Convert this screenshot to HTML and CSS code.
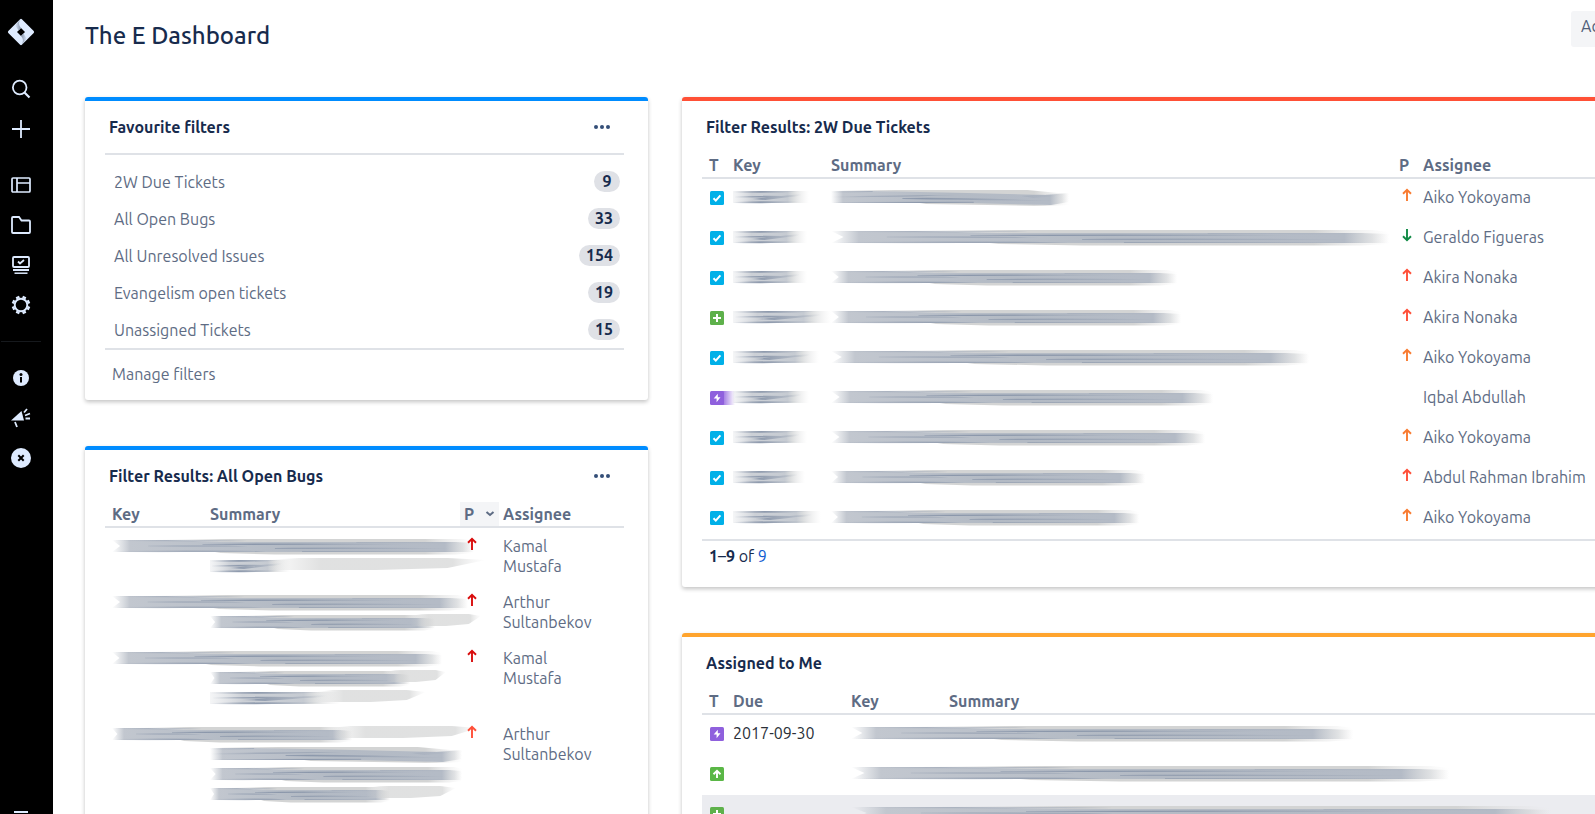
FILE: index.html
```html
<!DOCTYPE html>
<html lang="en">
<head>
<meta charset="utf-8">
<title>The E Dashboard</title>
<link rel="stylesheet" href="styles.css">
</head>
<body>
<svg class="defs" aria-hidden="true">
  <defs>
    <linearGradient id="fade"><stop offset="0" stop-color="#c6cbd2" stop-opacity="0"/><stop offset=".05" stop-color="#c2c7cf"/><stop offset=".5" stop-color="#b3bac4"/><stop offset=".92" stop-color="#b4bbc6"/><stop offset=".97" stop-color="#cfd2d5" stop-opacity=".6"/><stop offset="1" stop-color="#dcdcdc" stop-opacity="0"/></linearGradient>
    <linearGradient id="haze"><stop offset="0" stop-color="#d3d4d4" stop-opacity="0"/><stop offset=".25" stop-color="#d3d4d4"/><stop offset=".85" stop-color="#d3d4d4"/><stop offset="1" stop-color="#e4e4e4" stop-opacity="0"/></linearGradient>
    <linearGradient id="streak"><stop offset="0" stop-color="#7c8aa2" stop-opacity="0"/><stop offset=".4" stop-color="#8491a6" stop-opacity=".85"/><stop offset="1" stop-color="#8491a6" stop-opacity="0"/></linearGradient>
    <linearGradient id="keyfade"><stop offset="0" stop-color="#dcdfe3" stop-opacity=".3"/><stop offset=".25" stop-color="#ccd0d6"/><stop offset=".72" stop-color="#c6cbd2"/><stop offset=".8" stop-color="#dcdedf"/><stop offset="1" stop-color="#ececec" stop-opacity="0"/></linearGradient>
  </defs>
  <symbol id="smear-long" viewBox="0 0 400 20" preserveAspectRatio="none">
    <path fill="url(#haze)" d="M40 4 120 3H388L400 5V17L380 18.500H180L120 17Z"/>
    <path fill="url(#fade)" d="M0 4H60L120 6H380L400 7V16H0L9 10Z"/>
    <path fill="url(#streak)" d="M4 4.300Q80 3.500 150 5 80 5.500 4 5ZM100 8Q200 7 330 8 200 9.500 100 8.800ZM4 15Q90 14 170 15.200 90 16.500 4 16ZM180 12Q260 11 380 12.500 280 13.500 180 12.800ZM40 9.500Q90 9 150 10.200 90 11 40 10.500ZM210 15.200 384 15V16H210ZM270 6.500 385 6.300V7.300L270 7Z"/>
  </symbol>
  <symbol id="smear-wave" viewBox="0 0 400 20" preserveAspectRatio="none">
    <path fill="url(#haze)" d="M10 3H330L400 7V18L360 19 160 17Z"/>
    <path fill="url(#fade)" d="M0 4H70L230 6 360 8 400 6V15L370 18 230 16H0Z"/>
    <path fill="url(#streak)" d="M0 4.300 70 4V5L0 6ZM2 9.500Q70 8 210 8.500 80 10 2 10.500ZM4 15 240 14.800V16H4ZM120 11Q220 10 380 14 240 13 120 12ZM320 9 384 6V9L340 11Z"/>
  </symbol>
  <symbol id="smear-key" viewBox="0 0 80 20" preserveAspectRatio="none">
    <path fill="url(#keyfade)" d="M0 4H80V16H0Z"/>
    <path fill="url(#streak)" d="M0 4.500Q30 3.500 72 4.500 40 6.500 0 5.500ZM2 9.500Q36 8 70 9.500 40 10.800 2 10.500ZM0 15Q30 13.800 70 14.800 40 16.800 0 16ZM20 12 72 7V8.500L34 13Z"/>
  </symbol>
  <symbol id="smear-haze" viewBox="0 0 400 20" preserveAspectRatio="none">
    <path fill="url(#haze)" d="M0 4 60 2H330L400 4 330 12 200 14H0Z" opacity=".7"/>
  </symbol>
  <symbol id="t-task" viewBox="0 0 14 14"><rect width="14" height="14" rx="1.500" fill="#00b0e8"/><path d="m3.500 7.300 2.300 2.300 4.600-5.200" fill="none" stroke="#fff" stroke-width="2"/></symbol>
  <symbol id="t-new" viewBox="0 0 14 14"><rect width="14" height="14" rx="1.500" fill="#5eb14b"/><path d="M7 3v8M3 7h8" stroke="#fff" stroke-width="2"/></symbol>
  <symbol id="t-improve" viewBox="0 0 14 14"><rect width="14" height="14" rx="1.500" fill="#5ab746"/><path d="M7 11V4M3.500 7.200 7 3.800l3.500 3.400" fill="none" stroke="#fff" stroke-width="1.900"/></symbol>
  <symbol id="t-epic" viewBox="0 0 14 14"><rect width="14" height="14" rx="1.500" fill="#8f60dd"/><path d="M7.800 2.800 3.700 7.600h2.900v3.700l3.900-5H7.800Z" fill="#fff"/></symbol>
  <symbol id="arrow" viewBox="0 0 16 16"><path d="M8 14V3M4 6.800 8 2.900l4 3.900" fill="none" stroke="currentColor" stroke-width="1.900"/></symbol>
</svg>

<div class="app">
  <nav class="rail" aria-label="Global">
    <a class="rail-item logo" href="#" aria-label="Home"><svg width="28" height="28" viewBox="0 0 28 28"><defs><linearGradient id="lg" x1="0" x2="1"><stop offset="0" stop-color="#deebff"/><stop offset="1" stop-color="#8390a5"/></linearGradient></defs><path fill="#deebff" fill-rule="evenodd" d="M13.100 1.300a1.300 1.300 0 0 1 1.800 0l11.800 11.800a1.300 1.300 0 0 1 0 1.800L14.900 26.700a1.300 1.300 0 0 1-1.800 0L1.300 14.900a1.300 1.300 0 0 1 0-1.800ZM14 10l-4 4 4 4 4-4Z"/><path fill="url(#lg)" d="M14 10c-2.500-2.600-2.600-6-.5-8.500L8 7l3.500 5.500Z"/><path fill="url(#lg)" transform="rotate(180 14 14)" d="M14 10c-2.500-2.600-2.600-6-.5-8.500L8 7l3.500 5.500Z"/></svg></a>
    <div class="rail-group">
      <button class="rail-item" aria-label="Search"><svg width="20" height="20" viewBox="0 0 20 20" fill="none" stroke="currentColor" stroke-width="1.800"><circle cx="8.700" cy="8.500" r="6.800"/><path d="m13.500 13.500 5 5" stroke-width="2.200"/></svg></button>
      <button class="rail-item" aria-label="Create"><svg width="20" height="20" viewBox="0 0 20 20" stroke="currentColor" stroke-width="1.800"><path d="M10 1v18M1 10h18"/></svg></button>
    </div>
    <div class="rail-group">
      <a class="rail-item" href="#" aria-label="Dashboards"><svg width="20" height="20" viewBox="0 0 20 20" fill="none" stroke="currentColor" stroke-width="1.700"><rect x="1" y="3" width="18" height="14" rx="1"/><path d="M6 3v14M6 8h13"/></svg></a>
      <a class="rail-item" href="#" aria-label="Projects"><svg width="20" height="20" viewBox="0 0 20 20" fill="none" stroke="currentColor" stroke-width="1.800"><path d="M1 17V3q0-1 1-1h6l2.500 3.500H18q1 0 1 1V17q0 1-1 1H2q-1 0-1-1Z"/></svg></a>
      <a class="rail-item" href="#" aria-label="Issues"><svg width="20" height="20" viewBox="0 0 20 20" fill="none" stroke="currentColor" stroke-width="1.800"><rect x="2" y="2" width="16" height="10" rx="1"/><path d="m7 6.500 2 2L13 5M2 15h16" /><path d="M3.500 18.200h13" stroke-width="1.500"/></svg></a>
      <a class="rail-item" href="#" aria-label="Settings"><svg width="20" height="20" viewBox="0 0 20 20" fill="none" stroke="currentColor"><circle cx="10" cy="10" r="6.300" stroke-width="1.900"/><path stroke-width="3.600" d="m7.300 3.700-1-2.200M12.700 3.700l1-2.200M7.300 16.300l-1 2.200M12.700 16.300l1 2.200M3.700 7.300l-2.200-1M3.700 12.700l-2.200 1M16.300 7.300l2.200-1M16.300 12.700l2.200 1"/></svg></a>
    </div>
    <hr class="rail-line">
    <div class="rail-group">
      <button class="rail-item" aria-label="Information"><svg width="20" height="20" viewBox="0 0 20 20"><circle cx="10" cy="10" r="8" fill="currentColor"/><circle cx="10" cy="6.500" r="1.500"/><path d="M9 9h2v5.500H9z"/></svg></button>
      <button class="rail-item" aria-label="Feedback"><svg width="20" height="20" viewBox="0 0 20 20" fill="currentColor"><path d="M0 12.500 10.500 3l2.500 9.500Z"/><g fill="none" stroke="currentColor" stroke-width="1.800"><path d="m4 14 2 5M13 4.500 16 1M14 7.500l5-2M14.500 10.500H19"/></g></svg></button>
      <button class="rail-item" aria-label="Dismiss"><svg width="20" height="20" viewBox="0 0 20 20"><circle cx="10" cy="10" r="10" fill="currentColor"/><path d="m7.300 7.300 5.400 5.400m0-5.400-5.400 5.400" stroke="#000" stroke-width="2"/></svg></button>
    </div>
    <button class="rail-item rail-menu" aria-label="Menu"><svg width="16" height="16" viewBox="0 0 16 16" stroke="currentColor" stroke-width="2"><path d="M1 3h14M1 8h14M1 13h14"/></svg></button>
  </nav>

  <main class="page">
    <div class="canvas">
      <header class="page-head">
        <h1>The E Dashboard</h1>
        <button class="add">Add gadget</button>
      </header>

      <div class="board">
        <div class="column">
          <section class="card blue">
            <div class="card-head"><h2>Favourite filters</h2><button class="more" aria-label="Favourite filters options"><i></i><i></i><i></i></button></div>
            <ul class="filters">
              <li><a href="#">2W Due Tickets</a><span class="badge">9</span></li>
              <li><a href="#">All Open Bugs</a><span class="badge">33</span></li>
              <li><a href="#">All Unresolved Issues</a><span class="badge">154</span></li>
              <li><a href="#">Evangelism open tickets</a><span class="badge">19</span></li>
              <li><a href="#">Unassigned Tickets</a><span class="badge">15</span></li>
            </ul>
            <div class="manage"><a href="#">Manage filters</a></div>
          </section>

          <section class="card blue">
            <div class="card-head"><h2>Filter Results: All Open Bugs</h2><button class="more" aria-label="All Open Bugs options"><i></i><i></i><i></i></button></div>
            <table class="issues bugs">
              <colgroup><col class="c-bugkey"><col><col class="c-sort"><col class="c-who"></colgroup>
              <thead><tr><th>Key</th><th>Summary</th><th class="sorted"><span class="sort">P<svg width="10" height="8" viewBox="0 0 10 8"><path d="m1.500 2 3.500 3 3.500-3" fill="none" stroke="currentColor" stroke-width="2"/></svg></span></th><th>Assignee</th></tr></thead>
              <tbody>
                <tr><td colspan="2"><svg class="smear" style="width:362px"><use href="#smear-long"/></svg><span class="indent"><svg class="smear" style="width:80px"><use href="#smear-key"/></svg><svg class="smear tail" style="width:220px"><use href="#smear-haze"/></svg></span></td><td><svg class="prio highest"><use href="#arrow"/></svg></td><td><a href="#">Kamal Mustafa</a></td></tr>
                <tr><td colspan="2"><svg class="smear" style="width:356px"><use href="#smear-long"/></svg><span class="indent"><svg class="smear" style="width:225px"><use href="#smear-long"/></svg><svg class="smear tail" style="width:70px"><use href="#smear-haze"/></svg></span></td><td><svg class="prio highest"><use href="#arrow"/></svg></td><td><a href="#">Arthur Sultanbekov</a></td></tr>
                <tr><td colspan="2"><svg class="smear" style="width:330px"><use href="#smear-long"/></svg><span class="indent"><svg class="smear" style="width:200px"><use href="#smear-long"/></svg><svg class="smear tail" style="width:60px"><use href="#smear-haze"/></svg></span><span class="indent"><svg class="smear" style="width:130px"><use href="#smear-key"/></svg><svg class="smear tail" style="width:110px"><use href="#smear-haze"/></svg></span></td><td><svg class="prio highest"><use href="#arrow"/></svg></td><td><a href="#">Kamal Mustafa</a></td></tr>
                <tr><td colspan="2"><span class="run"><svg class="smear" style="width:240px"><use href="#smear-long"/></svg><svg class="smear tail" style="width:150px"><use href="#smear-haze"/></svg></span><span class="indent"><svg class="smear" style="width:252px"><use href="#smear-wave"/></svg></span><span class="indent"><svg class="smear" style="width:252px"><use href="#smear-long"/></svg></span><span class="indent"><svg class="smear" style="width:180px"><use href="#smear-long"/></svg><svg class="smear tail" style="width:90px"><use href="#smear-haze"/></svg></span></td><td><svg class="prio high"><use href="#arrow"/></svg></td><td><a href="#">Arthur Sultanbekov</a></td></tr>
                <tr><td colspan="2"><svg class="smear" style="width:330px"><use href="#smear-long"/></svg></td><td></td><td></td></tr>
              </tbody>
            </table>
          </section>
        </div>

        <div class="column">
          <section class="card red">
            <div class="card-head"><h2>Filter Results: 2W Due Tickets</h2></div>
            <table class="issues wide">
              <colgroup><col class="c-type"><col class="c-key"><col><col class="c-prio"><col class="c-name"><col class="c-last"></colgroup>
              <thead><tr><th>T</th><th>Key</th><th>Summary</th><th>P</th><th>Assignee</th><th class="sorted"></th></tr></thead>
              <tbody>
                <tr><td><svg class="type"><use href="#t-task"/></svg></td><td><svg class="smear" style="width:76px"><use href="#smear-key"/></svg></td><td><svg class="smear" style="width:238px"><use href="#smear-wave"/></svg></td><td><svg class="prio medium"><use href="#arrow"/></svg></td><td><a href="#">Aiko Yokoyama</a></td><td></td></tr>
                <tr><td><svg class="type"><use href="#t-task"/></svg></td><td><svg class="smear" style="width:74px"><use href="#smear-key"/></svg></td><td><svg class="smear" style="width:558px"><use href="#smear-long"/></svg></td><td><svg class="prio low"><use href="#arrow"/></svg></td><td><a href="#">Geraldo Figueras</a></td><td></td></tr>
                <tr><td><svg class="type"><use href="#t-task"/></svg></td><td><svg class="smear" style="width:74px"><use href="#smear-key"/></svg></td><td><svg class="smear" style="width:346px"><use href="#smear-long"/></svg></td><td><svg class="prio high"><use href="#arrow"/></svg></td><td><a href="#">Akira Nonaka</a></td><td></td></tr>
                <tr><td><svg class="type"><use href="#t-new"/></svg></td><td><svg class="smear" style="width:98px"><use href="#smear-key"/></svg></td><td><svg class="smear" style="width:350px"><use href="#smear-long"/></svg></td><td><svg class="prio high"><use href="#arrow"/></svg></td><td><a href="#">Akira Nonaka</a></td><td></td></tr>
                <tr><td><svg class="type"><use href="#t-task"/></svg></td><td><svg class="smear" style="width:86px"><use href="#smear-key"/></svg></td><td><svg class="smear" style="width:478px"><use href="#smear-long"/></svg></td><td><svg class="prio medium"><use href="#arrow"/></svg></td><td><a href="#">Aiko Yokoyama</a></td><td></td></tr>
                <tr><td><span class="type-run"><svg class="type"><use href="#t-epic"/></svg></span></td><td><svg class="smear" style="width:76px"><use href="#smear-key"/></svg></td><td><svg class="smear" style="width:382px"><use href="#smear-long"/></svg></td><td></td><td><a href="#">Iqbal Abdullah</a></td><td></td></tr>
                <tr><td><svg class="type"><use href="#t-task"/></svg></td><td><svg class="smear" style="width:74px"><use href="#smear-key"/></svg></td><td><svg class="smear" style="width:374px"><use href="#smear-long"/></svg></td><td><svg class="prio medium"><use href="#arrow"/></svg></td><td><a href="#">Aiko Yokoyama</a></td><td></td></tr>
                <tr><td><svg class="type"><use href="#t-task"/></svg></td><td><svg class="smear" style="width:72px"><use href="#smear-key"/></svg></td><td><svg class="smear" style="width:314px"><use href="#smear-long"/></svg></td><td><svg class="prio high"><use href="#arrow"/></svg></td><td><a href="#">Abdul Rahman Ibrahim</a></td><td></td></tr>
                <tr><td><svg class="type"><use href="#t-task"/></svg></td><td><svg class="smear" style="width:88px"><use href="#smear-key"/></svg></td><td><svg class="smear" style="width:308px"><use href="#smear-long"/></svg></td><td><svg class="prio medium"><use href="#arrow"/></svg></td><td><a href="#">Aiko Yokoyama</a></td><td></td></tr>
              </tbody>
            </table>
            <div class="pager"><b>1</b>–<b>9</b> of <a href="#">9</a></div>
          </section>

          <section class="card amber">
            <div class="card-head"><h2>Assigned to Me</h2></div>
            <table class="issues wide">
              <colgroup><col class="c-type"><col class="c-due"><col class="c-key"><col></colgroup>
              <thead><tr><th>T</th><th>Due</th><th>Key</th><th>Summary</th></tr></thead>
              <tbody>
                <tr><td><svg class="type"><use href="#t-epic"/></svg></td><td class="date">2017-09-30</td><td colspan="2"><svg class="smear" style="width:502px"><use href="#smear-long"/></svg></td></tr>
                <tr><td><svg class="type"><use href="#t-improve"/></svg></td><td></td><td colspan="2"><svg class="smear" style="width:598px"><use href="#smear-long"/></svg></td></tr>
                <tr class="hover"><td><svg class="type"><use href="#t-new"/></svg></td><td></td><td colspan="2"><svg class="smear" style="width:700px"><use href="#smear-long"/></svg></td></tr>
              </tbody>
            </table>
          </section>
        </div>
      </div>
    </div>
  </main>
</div>
</body>
</html>
```
FILE: styles.css
```css
* { box-sizing: border-box; }
body {
  margin: 0;
  background: #fff;
  color: #172b4d;
  font: 16px/20px Ubuntu, "Noto Sans", sans-serif;
}
h1, h2, ul { margin: 0; padding: 0; }
button { border: 0; padding: 0; background: none; color: inherit; font: inherit; }
a { color: inherit; text-decoration: none; }
.defs { position: absolute; width: 0; height: 0; }

.app { display: flex; height: 100vh; overflow: hidden; }

/* Global navigation */
.rail {
  flex: 0 0 53px;
  display: flex;
  flex-direction: column;
  padding-top: 12px;
  background: #000;
  color: #deebff;
}
.rail-item { display: flex; align-items: center; justify-content: center; width: 42px; height: 40px; flex: none; }
.rail-group { margin-bottom: 16px; }
.logo { margin-bottom: 17px; }
.rail-line { width: 40px; height: 1px; margin: 0 1px 16px; border: 0; background: #16191d; flex: none; }
.rail-menu { margin-top: auto; margin-bottom: -23px; }

/* Page */
.page { flex: 1; min-width: 0; overflow-x: hidden; overflow-y: auto; scrollbar-width: none; padding-left: 32px; }
.canvas { width: calc(100% + 88px); }
.page-head { display: flex; justify-content: space-between; align-items: flex-start; height: 97px; padding-top: 11px; }
.page-head h1 { font-size: 24px; font-weight: 500; line-height: 50px; }
.add { width: 112px; height: 36px; padding-left: 10px; padding-bottom: 6px; border-radius: 3px; background: #f4f5f7; color: #505f79; text-align: left; }
.board { display: grid; grid-template-columns: 9fr 16fr; gap: 34px; }
.column { display: flex; flex-direction: column; gap: 46px; min-width: 0; }

/* Gadget cards */
.card { border-top: 4px solid; border-radius: 3px; padding: 0 24px 0 20px; box-shadow: 0 2px 4px rgba(0, 0, 0, .24); }
.blue { border-color: #008cff; }
.red { border-color: #ff5036; }
.amber { border-color: #ffa42e; }
.card-head { display: flex; justify-content: space-between; align-items: center; height: 52px; padding-left: 4px; }
.card-head h2 { font-size: 16px; line-height: 20px; font-weight: 600; color: #172b4d; }
.more { display: flex; gap: 2px; padding: 8px 14px; }
.more i { width: 4px; height: 4px; border-radius: 50%; background: #344f78; }

.filters { list-style: none; border: solid #dfe2e7; border-width: 2px 0; padding: 8px 4px 0 9px; color: #5e6c84; }
.filters li { display: flex; justify-content: space-between; align-items: center; height: 37px; }
.badge { min-width: 26px; padding: 0 7px; border-radius: 11px; background: #dfe1e6; color: #172b4d; font-weight: 600; line-height: 21px; text-align: center; }
.manage { padding: 14px 7px 16px; color: #5e6c84; }

/* Issue tables */
.issues { width: 100%; table-layout: fixed; border-collapse: separate; border-spacing: 0; color: #5e6c84; }
.issues th { height: 26px; padding: 0 4px; border-bottom: 2px solid #dfe2e7; font-weight: 600; text-align: left; }
.issues td { padding: 8px 4px; vertical-align: top; }
.issues th:first-child, .issues td:first-child { padding-left: 7px; }
.wide td { height: 40px; padding-bottom: 12px; }
.issues .sorted { background-color: #f4f5f7; }
.sort { display: flex; align-items: center; justify-content: space-between; }
.c-bugkey { width: 101px; }
.c-sort { width: 39px; }
.c-who { width: 125px; }
.c-type { width: 27px; }
.c-key { width: 98px; }
.c-due { width: 118px; }
.c-prio { width: 24px; }
.c-name { width: 176px; }
.c-last { width: 64px; }
.bugs tbody a { display: block; width: 96px; }
.date { color: #2a2f38; }
.hover td { background: #ebecf0; }

.smear { display: block; flex: none; height: 20px; }
.indent, .run { display: flex; }
.indent { padding-left: 98px; }
.tail { margin-left: -24px; }
.type { display: block; width: 14px; height: 14px; margin: 4px 0 0 1px; }
.type-run { display: flow-root; width: 26px; background: linear-gradient(to right, transparent 12px, #8f60dd 12px, transparent) 0 4px / 26px 14px no-repeat; }
.prio { display: block; width: 16px; height: 16px; }
.highest { color: #d90d0d; }
.high { color: #ff4f38; }
.medium { color: #f97b30; }
.low { color: #108a45; transform: rotate(180deg); }

.pager { border-top: 2px solid #dfe2e7; padding: 5px 7px 21px; }
.pager b { font-weight: 600; }
.pager a { color: #0f5bd0; }
```
